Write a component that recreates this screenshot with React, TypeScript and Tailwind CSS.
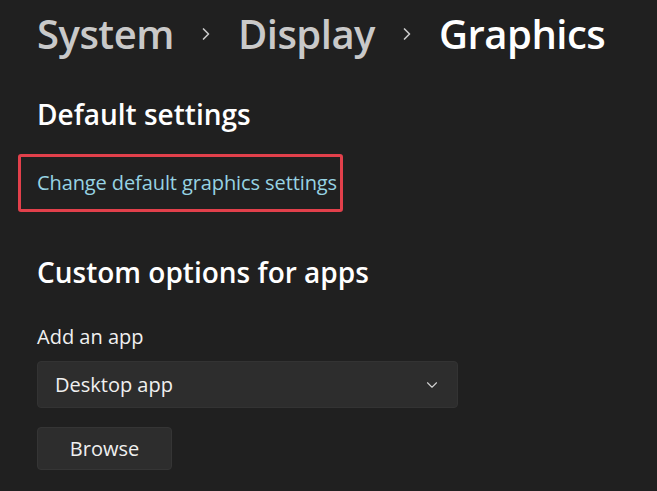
import { ChevronDown, ChevronRight } from "lucide-react";

const font = { fontFamily: '"Open Sans", "Noto Sans", sans-serif' };

const Breadcrumb = () => (
  <div className="flex items-center h-[64px] text-[40px] font-semibold tracking-[-0.5px]">
    <span className="text-[#c9c9c9]">System</span>
    <ChevronRight className="mx-[22px] h-5 w-5 text-[#c9c9c9]" strokeWidth={2} />
    <span className="text-[#c9c9c9]">Display</span>
    <ChevronRight className="mx-[22px] h-5 w-5 text-[#c9c9c9]" strokeWidth={2} />
    <span className="text-white">Graphics</span>
  </div>
);

export default function App() {
  return (
    <div
      className="w-[657px] h-[491px] overflow-hidden bg-[#202020] pl-[37px] pt-[2px] text-white"
      style={font}
    >
      <Breadcrumb />
      <h2 className="mt-[30px] text-[28px] font-semibold leading-[36px]">
        Default settings
      </h2>
      <div className="-ml-[19px] mt-[22px] flex h-[58px] w-[325px] items-center rounded-[3px] border-[3px] border-[#e2404b] pl-[16px]">
        <a className="whitespace-nowrap text-[20px] tracking-[-0.1px] text-[#97d3e3]">
          Change default graphics settings
        </a>
      </div>
      <h2 className="mt-[42px] text-[28px] font-semibold leading-[36px]">
        Custom options for apps
      </h2>
      <div className="mt-[34px] text-[20px] leading-[26px] text-[#f0f0f0]">
        Add an app
      </div>
      <div className="mt-[11px] flex h-[47px] w-[421px] items-center justify-between rounded-[4px] border border-[#333333] bg-[#2d2d2d] pl-[17px] pr-[16px]">
        <span className="text-[20px] text-[#f0f0f0]">Desktop app</span>
        <ChevronDown className="h-[18px] w-[18px] text-[#d0d0d0]" strokeWidth={1.5} />
      </div>
      <button className="mt-[19px] flex h-[43px] w-[135px] items-center justify-center rounded-[4px] border border-[#353535] bg-[#2d2d2d] text-[20px] text-[#f0f0f0]">
        Browse
      </button>
    </div>
  );
}
